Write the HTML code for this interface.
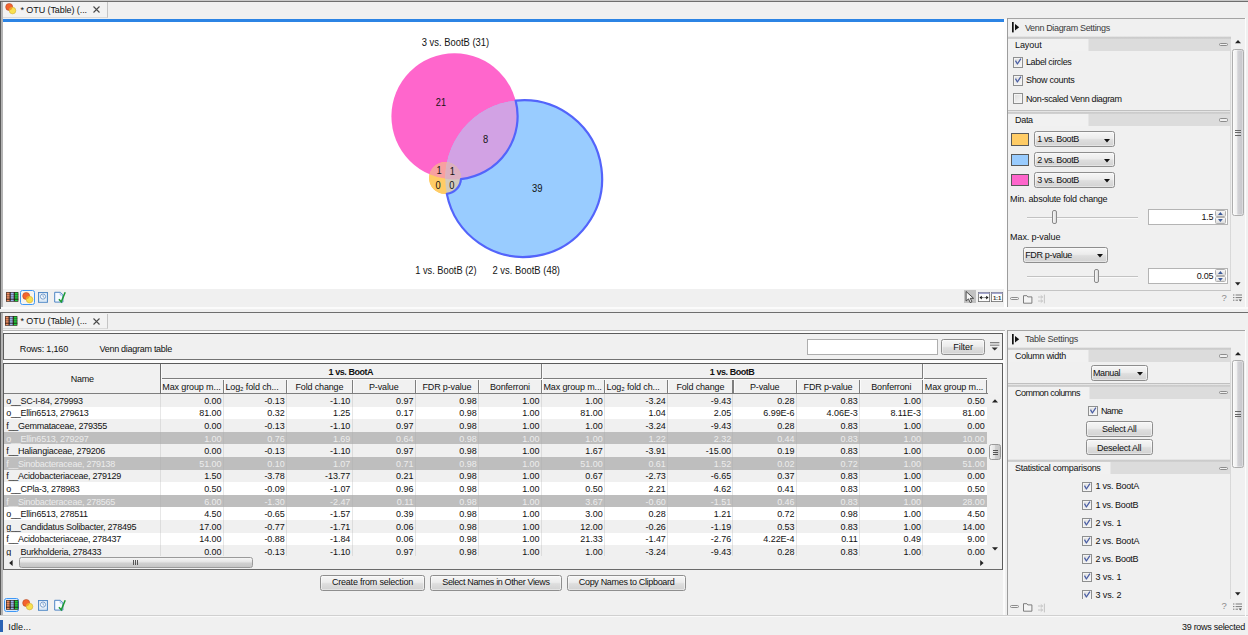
<!DOCTYPE html>
<html lang="en"><head><meta charset="utf-8"><title>OTU (Table) - Venn diagram</title>
<style>
html,body{margin:0;padding:0;background:#f0f0f0;}
body{width:1248px;height:635px;overflow:hidden;}
#app{position:relative;width:1248px;height:635px;overflow:hidden;background:#f0f0f0;
  font-family:"Liberation Sans",sans-serif;font-size:9px;color:#111;letter-spacing:-0.24px;}
#app div{position:absolute;box-sizing:border-box;}
#app svg{position:absolute;overflow:visible;}
.t{white-space:pre;line-height:12px;height:12px;}
.c{text-align:center;}
.b{font-weight:bold;}
.btn{border:1px solid #8e8e8e;border-radius:2.5px;background:linear-gradient(#f6f6f6,#ececec 45%,#dedede 55%,#d2d2d2);
  text-align:center;white-space:pre;box-shadow:inset 0 0 0 0.6px rgba(255,255,255,.8);}
.combo{border:1px solid #8e8e8e;border-radius:2.5px;background:linear-gradient(#f6f6f6,#ececec 45%,#dedede 55%,#d2d2d2);
  white-space:pre;box-shadow:inset 0 0 0 0.6px rgba(255,255,255,.8);}
.cb{border:1px solid #8e8f8f;background:linear-gradient(135deg,#dcdcdc,#f8f8f8);box-shadow:inset 0 0 0 1px #f4f4f4;}
.hdrtab{background:#f0f0f0;}
.hdrbar{background:#dcdcdc;}

</style></head>
<body>
<div id="app">
<div style="left:0px;top:0px;width:1248px;height:1px;background:#c8c8c8"></div>
<div style="left:0px;top:1px;width:1248px;height:1px;background:#6e6e6e"></div>
<div style="left:0px;top:1px;width:1.3px;height:307.5px;background:#5a5a5a"></div>
<div style="left:1.3px;top:2px;width:1.4px;height:306.5px;background:#b4b4b4"></div>
<div style="left:2.6px;top:2.2px;width:105px;height:15.6px;background:#f2f2f2;border-right:1px solid #c4c4c4;border-bottom:1px solid #dadada"></div>
<svg style="left:5.2px;top:3.4px" width="12" height="12" viewBox="0 0 12 12"><circle cx="4.2" cy="4.0" r="3.55" fill="#f4642e" stroke="#a8401c" stroke-width=".5"/><circle cx="7.55" cy="7.6" r="3.3" fill="#f8e050" stroke="#c8a428" stroke-width=".5"/><path d="M4.3 7.4A3.3 3.3 0 0 1 7.5 4.3 3.55 3.55 0 0 1 4.3 7.4Z" fill="#f4a024"/></svg>
<div class="t" style="left:20.5px;top:3.80px;letter-spacing:-0.084px;">* OTU (Table) (...</div>
<svg style="left:93.2px;top:6.2px" width="7" height="7" viewBox="0 0 7 7"><path d="M.5 .5L6.5 6.5M6.5 .5L.5 6.5" stroke="#4a4a4a" stroke-width="1.1"/></svg>
<div style="left:2.8px;top:18.6px;width:1001.6px;height:3.4px;background:#fff"></div>
<div style="left:2.8px;top:19.2px;width:1001.6px;height:2.4px;background:#2c84e4"></div>
<div style="left:2.8px;top:21.8px;width:1001.6px;height:267.4px;background:#fff"></div>
<svg style="left:0;top:0" width="1248" height="300" viewBox="0 0 1248 300" font-family="Liberation Sans, sans-serif" font-size="10.1" fill="#141414" letter-spacing="0"><defs><clipPath id="cB"><circle cx="523.7" cy="178.55" r="78.4" /></clipPath><clipPath id="cP"><circle cx="454.5" cy="116.3" r="63.1" /></clipPath><clipPath id="cO"><circle cx="445.0" cy="178.0" r="16.0" /></clipPath></defs><circle cx="445.0" cy="178.0" r="16.0" fill="#ffcc66"/><circle cx="454.5" cy="116.3" r="63.1" fill="#ff66cc"/><circle cx="523.7" cy="178.55" r="78.4" fill="#99ccff"/><circle cx="454.5" cy="116.3" r="63.1" fill="#d2a2e4" clip-path="url(#cB)"/><g clip-path="url(#cO)"><circle cx="445.0" cy="178.0" r="16.0" fill="#ffcc66"/><circle cx="454.5" cy="116.3" r="63.1" fill="#f8a0a0"/><circle cx="523.7" cy="178.55" r="78.4" fill="#d2cabc"/><g clip-path="url(#cB)"><circle cx="454.5" cy="116.3" r="63.1" fill="#dcb0c0"/></g></g><path d="M515.61 100.57A78.4 78.4 0 1 1 446.82 193.90A16.0 16.0 0 0 0 460.96 179.07A63.1 63.1 0 0 0 515.61 100.57Z" fill="none" stroke="#5364fb" stroke-width="2.2" stroke-linejoin="round"/><text x="421.8" y="45.7" textLength="67.3" lengthAdjust="spacingAndGlyphs">3 vs. BootB (31)</text><text x="415.2" y="274.1" textLength="61.3" lengthAdjust="spacingAndGlyphs">1 vs. BootB (2)</text><text x="492.5" y="274.1" textLength="67.5" lengthAdjust="spacingAndGlyphs">2 vs. BootB (48)</text><text x="435.8" y="106.4" textLength="10.2" lengthAdjust="spacingAndGlyphs">21</text><text x="483" y="143.1" textLength="5.2" lengthAdjust="spacingAndGlyphs">8</text><text x="531.9" y="191.8" textLength="10.5" lengthAdjust="spacingAndGlyphs">39</text><text x="436.6" y="174.2" textLength="5.2" lengthAdjust="spacingAndGlyphs">1</text><text x="449.8" y="175.3" textLength="5.2" lengthAdjust="spacingAndGlyphs">1</text><text x="435.4" y="189.1" textLength="5.2" lengthAdjust="spacingAndGlyphs">0</text><text x="449.2" y="189.1" textLength="5.2" lengthAdjust="spacingAndGlyphs">0</text></svg>
<svg style="left:5.6px;top:292.1px" width="12.4" height="9.8" viewBox="0 0 12.4 9.8"><rect x="0" y="0" width="12.4" height="9.8" rx=".5" fill="#2e201a"/><rect x=".6" y=".6" width="3.0" height="8.6" fill="#f09064"/><rect x="4.7" y=".6" width="3.0" height="8.6" fill="#9cb4f0"/><rect x="8.8" y=".6" width="3.0" height="8.6" fill="#1ed040"/><path d="M0 2.6H12.4M0 4.8H12.4" stroke="#2e201a" stroke-width=".7" opacity=".6"/><path d="M0 7.2H12.4" stroke="#20140e" stroke-width="1" opacity=".85"/></svg>
<div style="left:20.2px;top:290.2px;width:14.6px;height:14.6px;border:1px solid #3f98f6;border-radius:2.5px;background:#f6f4ee"></div>
<svg style="left:22px;top:291.8px" width="12" height="12" viewBox="0 0 12 12"><circle cx="4.2" cy="4.0" r="3.55" fill="#f4642e" stroke="#a8401c" stroke-width=".5"/><circle cx="7.55" cy="7.6" r="3.3" fill="#f8e050" stroke="#c8a428" stroke-width=".5"/><path d="M4.3 7.4A3.3 3.3 0 0 1 7.5 4.3 3.55 3.55 0 0 1 4.3 7.4Z" fill="#f4a024"/></svg>
<svg style="left:38.4px;top:292.1px" width="10" height="10.8" viewBox="0 0 10 10.8"><rect x=".5" y=".5" width="9" height="9.8" fill="#c4daf0" stroke="#4a84c4" stroke-width=".9"/><rect x="1.5" y="1.4" width="7" height="6.6" fill="#eef4fa"/><circle cx="5" cy="4.6" r="2.6" fill="#f8fbfe" stroke="#5a88c0" stroke-width=".8"/><path d="M5 3.1V4.7L6.3 5.3" stroke="#5a88c0" stroke-width=".7" fill="none"/><path d="M1.6 8.9H8.4" stroke="#f0f6fc" stroke-width=".9"/></svg>
<svg style="left:53.8px;top:291px" width="13" height="12" viewBox="0 0 13 12"><path d="M.7 1.3H6.4L8.9 3.8V11.1H.7Z" fill="#f6faff" stroke="#3c78c0" stroke-width=".9"/><path d="M6.2 1.5V4H8.7" fill="none" stroke="#7ca4d8" stroke-width=".7"/><path d="M4.9 8.2L7.3 10.8L11.2 1.2" fill="none" stroke="#1c9a34" stroke-width="1.5"/></svg>
<div style="left:964px;top:290.2px;width:11.8px;height:12.4px;background:#c2c2c2"></div>
<svg style="left:965px;top:290.6px" width="10" height="12" viewBox="0 0 10 12"><path d="M1.1 .5V10L3.5 7.9L5.2 11.6L6.9 10.8L5.3 7.3H8.6Z" fill="#f6f6f6" stroke="#3a3a3a" stroke-width=".9" stroke-linejoin="round"/></svg>
<svg style="left:977.8px;top:292px" width="12" height="10" viewBox="0 0 12 10"><rect x=".4" y=".4" width="11.2" height="9.2" fill="#fcfcfc" stroke="#6c6c6c" stroke-width=".8"/><rect x=".4" y=".4" width="11.2" height="1.5" fill="#9a9cc8"/><path d="M1.4 5.6L3.8 3.8V7.4ZM10.6 5.6L8.2 3.8V7.4Z" fill="#111"/><path d="M3.8 5.6H8.2" stroke="#111" stroke-width=".8" stroke-dasharray="1 .7"/></svg>
<svg style="left:991px;top:292px" width="12" height="10" viewBox="0 0 12 10"><rect x=".4" y=".4" width="11.2" height="9.2" fill="#fcfcfc" stroke="#6c6c6c" stroke-width=".8"/><rect x=".4" y=".4" width="11.2" height="1.5" fill="#9a9cc8"/><text x="6" y="8.2" font-size="6" font-family="Liberation Sans, sans-serif" text-anchor="middle" fill="#3c3c3c" font-weight="bold" letter-spacing="-.2">1:1</text></svg>
<div style="left:1.3px;top:307.4px;width:1246.7px;height:1.2px;background:#fbfbfb"></div>
<div style="left:1004.4px;top:18.6px;width:2.4px;height:289px;background:#fdfdfd"></div>
<div style="left:1006.8px;top:18.2px;width:238.4px;height:1.2px;background:#a4a4a4"></div>
<div style="left:1006.8px;top:18.2px;width:1.1px;height:288.4px;background:#9c9c9c"></div>
<div style="left:1245.2px;top:18.2px;width:1.2px;height:289px;background:#fcfcfc"></div>
<svg style="left:1012.2px;top:22.200000000000003px" width="8" height="10.4" viewBox="0 0 8 10.4"><rect x="0" y="0" width="1.7" height="10.4" fill="#111"/><path d="M3 2L7.2 5.2L3 8.4Z" fill="#111"/></svg>
<div class="t" style="left:1024.9px;top:21.50px;letter-spacing:-0.340px;color:#3c3c3c">Venn Diagram Settings</div>
<div style="left:1008px;top:35.599999999999994px;width:222.5999999999999px;height:3.2px;background:linear-gradient(#f0f0f0,#c8c8c8 55%,#d4d4d4)"></div>
<div style="left:1008px;top:38.8px;width:222.5999999999999px;height:12px;background:#dcdcdc"></div>
<div style="left:1008px;top:38.8px;width:80.8px;height:12px;background:#f1f1f1;border-right:1px solid #e6e6e6"></div>
<div class="t" style="left:1015.0px;top:38.70px;letter-spacing:-0.070px;">Layout</div>
<div style="left:1218.6px;top:43.0px;width:9.4px;height:3.4px;border:.9px solid #8c8c8c;border-radius:1.6px;background:#f0f0f0"></div>
<div class="cb" style="left:1013.1px;top:57.2px;width:10.4px;height:10.4px;"></div>
<svg style="left:1013.1px;top:57.2px" width="10.4" height="10.4" viewBox="0 0 10.4 10.4"><path d="M2.5 3.6L4.4 7L7.9 1.6" fill="none" stroke="#4a5ea4" stroke-width="1.25" stroke-linejoin="round"/></svg>
<div class="t" style="left:1025.9px;top:56.40px;letter-spacing:-0.340px;">Label circles</div>
<div class="cb" style="left:1013.1px;top:75.26px;width:10.4px;height:10.4px;"></div>
<svg style="left:1013.1px;top:75.26px" width="10.4" height="10.4" viewBox="0 0 10.4 10.4"><path d="M2.5 3.6L4.4 7L7.9 1.6" fill="none" stroke="#4a5ea4" stroke-width="1.25" stroke-linejoin="round"/></svg>
<div class="t" style="left:1025.9px;top:74.46px;letter-spacing:-0.266px;">Show counts</div>
<div class="cb" style="left:1013.1px;top:93.32px;width:10.4px;height:10.4px;"></div>
<div class="t" style="left:1025.9px;top:92.52px;letter-spacing:-0.341px;">Non-scaled Venn diagram</div>
<div style="left:1008px;top:110.2px;width:222.6px;height:1px;background:#c0c0c0"></div>
<div style="left:1008px;top:110.8px;width:222.5999999999999px;height:3.2px;background:linear-gradient(#f0f0f0,#c8c8c8 55%,#d4d4d4)"></div>
<div style="left:1008px;top:114.0px;width:222.5999999999999px;height:12px;background:#dcdcdc"></div>
<div style="left:1008px;top:114.0px;width:80.8px;height:12px;background:#f1f1f1;border-right:1px solid #e6e6e6"></div>
<div class="t" style="left:1015.0px;top:113.90px;letter-spacing:-0.302px;">Data</div>
<div style="left:1218.6px;top:118.2px;width:9.4px;height:3.4px;border:.9px solid #8c8c8c;border-radius:1.6px;background:#f0f0f0"></div>
<div style="left:1010.9px;top:133.29999999999998px;width:18.1px;height:12.3px;background:#ffcc66;border:1px solid #5a5a5a"></div>
<div class="combo" style="left:1033.7px;top:131.2px;width:81.3px;height:15.8px;"></div>
<div class="t" style="left:1037.2px;top:133.20px;letter-spacing:-0.393px;">1 vs. BootB</div>
<svg style="left:1103.8px;top:138.5px" width="6" height="4" viewBox="0 0 6 4"><path d="M0 0H6L3 3.4Z" fill="#111"/></svg>
<div style="left:1010.9px;top:153.7px;width:18.1px;height:12.3px;background:#99ccff;border:1px solid #5a5a5a"></div>
<div class="combo" style="left:1033.7px;top:151.6px;width:81.3px;height:15.8px;"></div>
<div class="t" style="left:1037.2px;top:153.60px;letter-spacing:-0.393px;">2 vs. BootB</div>
<svg style="left:1103.8px;top:158.9px" width="6" height="4" viewBox="0 0 6 4"><path d="M0 0H6L3 3.4Z" fill="#111"/></svg>
<div style="left:1010.9px;top:174.1px;width:18.1px;height:12.3px;background:#ff66cc;border:1px solid #5a5a5a"></div>
<div class="combo" style="left:1033.7px;top:172.0px;width:81.3px;height:15.8px;"></div>
<div class="t" style="left:1037.2px;top:174.00px;letter-spacing:-0.393px;">3 vs. BootB</div>
<svg style="left:1103.8px;top:179.3px" width="6" height="4" viewBox="0 0 6 4"><path d="M0 0H6L3 3.4Z" fill="#111"/></svg>
<div class="t" style="left:1010.1px;top:192.60px;letter-spacing:-0.210px;">Min. absolute fold change</div>
<div style="left:1026.6px;top:216.7px;width:111.80000000000018px;height:1.1px;background:#c2c2c2"></div>
<div style="left:1026.6px;top:217.79999999999998px;width:111.80000000000018px;height:0.8px;background:#fafafa"></div>
<div style="left:1052.3px;top:210.0px;width:5.0px;height:14.3px;border:1px solid #8a8a8a;border-radius:2px;background:linear-gradient(90deg,#f8f8f8,#dcdcdc)"></div>
<div style="left:1148.1px;top:209.2px;width:79.5px;height:15.6px;background:#fff;border:1px solid #b4b4b4"></div>
<div class="t" style="right:34.80000000000018px;top:211.30px;">1.5</div>
<div style="left:1215.1999999999998px;top:210.39999999999998px;width:11.2px;height:6.6px;border:1px solid #b0b0b0;border-radius:1.5px;background:linear-gradient(#f8f8f8,#dddddd)"></div>
<div style="left:1215.1999999999998px;top:217.0px;width:11.2px;height:6.6px;border:1px solid #b0b0b0;border-radius:1.5px;background:linear-gradient(#f8f8f8,#dddddd)"></div>
<svg style="left:1218.3999999999999px;top:212.39999999999998px" width="4.8" height="3" viewBox="0 0 4.8 3"><path d="M0 3H4.8L2.4 0Z" fill="#3a5a9a"/></svg>
<svg style="left:1218.3999999999999px;top:218.6px" width="4.8" height="3" viewBox="0 0 4.8 3"><path d="M0 0H4.8L2.4 3Z" fill="#3a5a9a"/></svg>
<div class="t" style="left:1010.1px;top:231.00px;letter-spacing:-0.110px;">Max. p-value</div>
<div class="combo" style="left:1022.9px;top:247.1px;width:84.8px;height:15.6px;"></div>
<div class="t" style="left:1025.2px;top:249.00px;letter-spacing:-0.338px;">FDR p-value</div>
<svg style="left:1096.5px;top:254.3px" width="6" height="4" viewBox="0 0 6 4"><path d="M0 0H6L3 3.4Z" fill="#111"/></svg>
<div style="left:1026.6px;top:275.5px;width:111.80000000000018px;height:1.1px;background:#c2c2c2"></div>
<div style="left:1026.6px;top:276.59999999999997px;width:111.80000000000018px;height:0.8px;background:#fafafa"></div>
<div style="left:1094px;top:268.79999999999995px;width:5.0px;height:14.3px;border:1px solid #8a8a8a;border-radius:2px;background:linear-gradient(90deg,#f8f8f8,#dcdcdc)"></div>
<div style="left:1148.1px;top:268.1px;width:79.5px;height:15.6px;background:#fff;border:1px solid #b4b4b4"></div>
<div class="t" style="right:34.80000000000018px;top:270.20px;">0.05</div>
<div style="left:1215.1999999999998px;top:269.3px;width:11.2px;height:6.6px;border:1px solid #b0b0b0;border-radius:1.5px;background:linear-gradient(#f8f8f8,#dddddd)"></div>
<div style="left:1215.1999999999998px;top:275.90000000000003px;width:11.2px;height:6.6px;border:1px solid #b0b0b0;border-radius:1.5px;background:linear-gradient(#f8f8f8,#dddddd)"></div>
<svg style="left:1218.3999999999999px;top:271.3px" width="4.8" height="3" viewBox="0 0 4.8 3"><path d="M0 3H4.8L2.4 0Z" fill="#3a5a9a"/></svg>
<svg style="left:1218.3999999999999px;top:277.50000000000006px" width="4.8" height="3" viewBox="0 0 4.8 3"><path d="M0 0H4.8L2.4 3Z" fill="#3a5a9a"/></svg>
<div style="left:1229.8000000000002px;top:49.4px;width:1.2px;height:240.20000000000002px;background:linear-gradient(90deg,#cfcfcf,#e2e2e2)"></div>
<svg style="left:1235.0px;top:40.4px" width="6" height="3.4" viewBox="0 0 6 3.4"><path d="M0 3.2H6L3 0Z" fill="#222"/></svg>
<svg style="left:1235.2px;top:282.0px" width="5.6" height="3.4" viewBox="0 0 5.6 3.4"><path d="M0 .2H5.6L2.8 3.4Z" fill="#222"/></svg>
<div style="left:1231.8000000000002px;top:49.3px;width:11.8px;height:166.7px;border:1.1px solid #adadad;border-radius:2.5px;background:linear-gradient(90deg,#fbfbfb,#f0f0f0 38%,#d2d2d6 48%,#c6c6ca);box-shadow:inset 0 0 0 .6px rgba(255,255,255,.6)"></div>
<div style="left:1235.4px;top:129.85px;width:5.2px;height:0.9px;background:#666"></div>
<div style="left:1235.4px;top:132.25px;width:5.2px;height:0.9px;background:#666"></div>
<div style="left:1235.4px;top:134.65px;width:5.2px;height:0.9px;background:#666"></div>
<div style="left:1008px;top:290px;width:1223px;height:1px;background:#c4c4c4;width:222.6px"></div>
<div style="left:1010.1px;top:296.8px;width:8.8px;height:3.3px;border:.9px solid #8c8c8c;border-radius:1.6px;background:#f2f2f2"></div>
<svg style="left:1022.6px;top:294.6px" width="10" height="9" viewBox="0 0 10 9"><path d="M.5 8.2V.7H3.9L4.8 1.9H8.9V8.2Z" fill="#f4f4f4" stroke="#707070" stroke-width=".9" stroke-linejoin="round"/></svg>
<svg style="left:1036.6px;top:294.2px" width="9" height="10" viewBox="0 0 9 10"><path d="M1 3H5.6M1 7H5.6M7.4 .6V9.4M3.8 1.4L5.6 3L3.8 4.6M3.8 5.4L5.6 7L3.8 8.6" fill="none" stroke="#c0c0c0" stroke-width=".9"/></svg>
<div class="t" style="left:1221.4px;top:291.80px;color:#8a8a8a;font-size:9.5px">?</div>
<svg style="left:1233.4px;top:294.4px" width="9" height="8" viewBox="0 0 9 8"><path d="M0 1H1.4M2.6 1H9M0 3.6H1.4M2.6 3.6H9M0 6.2H1.4M2.6 6.2H5" stroke="#7a7a7a" stroke-width="1"/><path d="M5.6 5.4H9L7.3 7.6Z" fill="#555"/></svg>
<div style="left:0px;top:311.8px;width:1248px;height:1.2px;background:#6e6e6e"></div>
<div style="left:0px;top:313px;width:1.3px;height:303px;background:#5a5a5a"></div>
<div style="left:1.3px;top:313px;width:1.4px;height:303px;background:#b4b4b4"></div>
<div style="left:2.6px;top:313.6px;width:105px;height:15.8px;background:#f2f2f2;border-right:1px solid #c4c4c4;border-bottom:1px solid #dadada"></div>
<svg style="left:5.2px;top:315.8px" width="12.4" height="9.8" viewBox="0 0 12.4 9.8"><rect x="0" y="0" width="12.4" height="9.8" rx=".5" fill="#2e201a"/><rect x=".6" y=".6" width="3.0" height="8.6" fill="#f09064"/><rect x="4.7" y=".6" width="3.0" height="8.6" fill="#9cb4f0"/><rect x="8.8" y=".6" width="3.0" height="8.6" fill="#1ed040"/><path d="M0 2.6H12.4M0 4.8H12.4" stroke="#2e201a" stroke-width=".7" opacity=".6"/><path d="M0 7.2H12.4" stroke="#20140e" stroke-width="1" opacity=".85"/></svg>
<div class="t" style="left:20.5px;top:315.30px;letter-spacing:-0.084px;">* OTU (Table) (...</div>
<svg style="left:93.2px;top:317.6px" width="7" height="7" viewBox="0 0 7 7"><path d="M.5 .5L6.5 6.5M6.5 .5L.5 6.5" stroke="#4a4a4a" stroke-width="1.1"/></svg>
<div style="left:2.6px;top:329.6px;width:1002px;height:1px;background:#b4b4b4"></div>
<div style="left:2.6px;top:330.6px;width:1002px;height:2.2px;background:#fcfcfc"></div>
<div style="left:1003px;top:330.6px;width:1.6px;height:286px;background:#fbfbfb"></div>
<div style="left:1004.6px;top:330.6px;width:1.8px;height:286px;background:#f0f0f0"></div>
<div style="left:2.8px;top:332.6px;width:1000.2px;height:27.4px;border:1.5px solid #5c5c5c;border-bottom:1.1px solid #727272;border-right-width:1.2px;background:#f0f0f0"></div>
<div style="left:2.8px;top:360px;width:1000.2px;height:2.6px;background:#fdfdfd"></div>
<div style="left:2.8px;top:362.6px;width:1000.2px;height:207.2px;border:1.5px solid #5c5c5c;border-right-width:1.2px;border-bottom:1.2px solid #6a6a6a;background:#f0f0f0"></div>
<div class="t" style="left:19.8px;top:343.10px;letter-spacing:-0.166px;">Rows: 1,160</div>
<div class="t" style="left:99.5px;top:343.10px;letter-spacing:-0.280px;">Venn diagram table</div>
<div style="left:807.2px;top:339.4px;width:131.2px;height:16px;background:#fff;border:1px solid #aeaeae"></div>
<div class="btn" style="left:941.4px;top:339.3px;width:43.4px;height:16.2px;line-height:14.0px;padding-top:0px;letter-spacing:-0.083px;">Filter</div>
<svg style="left:989.8px;top:341.8px" width="9.4" height="9" viewBox="0 0 9.4 9"><path d="M0 .7H9.4" stroke="#555" stroke-width=".9"/><path d="M0 3.2H9.4" stroke="#8a8a8a" stroke-width="1.2"/><path d="M1.6 5.4H7.8L4.7 8.6Z" fill="#333"/></svg>
<div style="left:4.3px;top:364.0px;width:997.5px;height:30.0px;background:#f1f1f1"></div>
<div style="left:4.3px;top:394.0px;width:982.7px;height:161.70000000000005px;overflow:hidden;background:#fff">
<div style="left:0;top:0.00px;width:982.7px;height:12.70px;overflow:hidden;background:#f0f0f0;">
<div class="t" style="left:2.0px;top:0.9px;letter-spacing:-0.252px;">o__SC-I-84, 279993</div>
<div class="t" style="right:765.5px;top:0.9px;letter-spacing:-0.05px">0.00</div>
<div class="t" style="right:702.3px;top:0.9px;letter-spacing:-0.05px">-0.13</div>
<div class="t" style="right:636.7px;top:0.9px;letter-spacing:-0.05px">-1.10</div>
<div class="t" style="right:573.6px;top:0.9px;letter-spacing:-0.05px">0.97</div>
<div class="t" style="right:510.4px;top:0.9px;letter-spacing:-0.05px">0.98</div>
<div class="t" style="right:447.5px;top:0.9px;letter-spacing:-0.05px">1.00</div>
<div class="t" style="right:384.4px;top:0.9px;letter-spacing:-0.05px">1.00</div>
<div class="t" style="right:321.2px;top:0.9px;letter-spacing:-0.05px">-3.24</div>
<div class="t" style="right:255.9px;top:0.9px;letter-spacing:-0.05px">-9.43</div>
<div class="t" style="right:192.5px;top:0.9px;letter-spacing:-0.05px">0.28</div>
<div class="t" style="right:129.2px;top:0.9px;letter-spacing:-0.05px">0.83</div>
<div class="t" style="right:66.1px;top:0.9px;letter-spacing:-0.05px">1.00</div>
<div class="t" style="right:2.3px;top:0.9px;letter-spacing:-0.05px">0.50</div>
</div>
<div style="left:0;top:12.60px;width:982.7px;height:12.70px;overflow:hidden;background:#ffffff;">
<div class="t" style="left:2.0px;top:0.9px;letter-spacing:-0.244px;">o__Ellin6513, 279613</div>
<div class="t" style="right:765.5px;top:0.9px;letter-spacing:-0.05px">81.00</div>
<div class="t" style="right:702.3px;top:0.9px;letter-spacing:-0.05px">0.32</div>
<div class="t" style="right:636.7px;top:0.9px;letter-spacing:-0.05px">1.25</div>
<div class="t" style="right:573.6px;top:0.9px;letter-spacing:-0.05px">0.17</div>
<div class="t" style="right:510.4px;top:0.9px;letter-spacing:-0.05px">0.98</div>
<div class="t" style="right:447.5px;top:0.9px;letter-spacing:-0.05px">1.00</div>
<div class="t" style="right:384.4px;top:0.9px;letter-spacing:-0.05px">81.00</div>
<div class="t" style="right:321.2px;top:0.9px;letter-spacing:-0.05px">1.04</div>
<div class="t" style="right:255.9px;top:0.9px;letter-spacing:-0.05px">2.05</div>
<div class="t" style="right:192.5px;top:0.9px;letter-spacing:-0.05px">6.99E-6</div>
<div class="t" style="right:129.2px;top:0.9px;letter-spacing:-0.05px">4.06E-3</div>
<div class="t" style="right:66.1px;top:0.9px;letter-spacing:-0.05px">8.11E-3</div>
<div class="t" style="right:2.3px;top:0.9px;letter-spacing:-0.05px">81.00</div>
</div>
<div style="left:0;top:25.20px;width:982.7px;height:12.70px;overflow:hidden;background:#f0f0f0;">
<div class="t" style="left:2.0px;top:0.9px;letter-spacing:-0.271px;">f__Gemmataceae, 279355</div>
<div class="t" style="right:765.5px;top:0.9px;letter-spacing:-0.05px">0.00</div>
<div class="t" style="right:702.3px;top:0.9px;letter-spacing:-0.05px">-0.13</div>
<div class="t" style="right:636.7px;top:0.9px;letter-spacing:-0.05px">-1.10</div>
<div class="t" style="right:573.6px;top:0.9px;letter-spacing:-0.05px">0.97</div>
<div class="t" style="right:510.4px;top:0.9px;letter-spacing:-0.05px">0.98</div>
<div class="t" style="right:447.5px;top:0.9px;letter-spacing:-0.05px">1.00</div>
<div class="t" style="right:384.4px;top:0.9px;letter-spacing:-0.05px">1.00</div>
<div class="t" style="right:321.2px;top:0.9px;letter-spacing:-0.05px">-3.24</div>
<div class="t" style="right:255.9px;top:0.9px;letter-spacing:-0.05px">-9.43</div>
<div class="t" style="right:192.5px;top:0.9px;letter-spacing:-0.05px">0.28</div>
<div class="t" style="right:129.2px;top:0.9px;letter-spacing:-0.05px">0.83</div>
<div class="t" style="right:66.1px;top:0.9px;letter-spacing:-0.05px">1.00</div>
<div class="t" style="right:2.3px;top:0.9px;letter-spacing:-0.05px">0.00</div>
</div>
<div style="left:0;top:37.80px;width:982.7px;height:12.70px;overflow:hidden;background:#bebebe;color:#ececec;">
<div class="t" style="left:2.0px;top:0.9px;letter-spacing:-0.244px;">o__Ellin6513, 279297</div>
<div class="t" style="right:765.5px;top:0.9px;letter-spacing:-0.05px">1.00</div>
<div class="t" style="right:702.3px;top:0.9px;letter-spacing:-0.05px">0.76</div>
<div class="t" style="right:636.7px;top:0.9px;letter-spacing:-0.05px">1.69</div>
<div class="t" style="right:573.6px;top:0.9px;letter-spacing:-0.05px">0.64</div>
<div class="t" style="right:510.4px;top:0.9px;letter-spacing:-0.05px">0.98</div>
<div class="t" style="right:447.5px;top:0.9px;letter-spacing:-0.05px">1.00</div>
<div class="t" style="right:384.4px;top:0.9px;letter-spacing:-0.05px">1.00</div>
<div class="t" style="right:321.2px;top:0.9px;letter-spacing:-0.05px">1.22</div>
<div class="t" style="right:255.9px;top:0.9px;letter-spacing:-0.05px">2.32</div>
<div class="t" style="right:192.5px;top:0.9px;letter-spacing:-0.05px">0.44</div>
<div class="t" style="right:129.2px;top:0.9px;letter-spacing:-0.05px">0.83</div>
<div class="t" style="right:66.1px;top:0.9px;letter-spacing:-0.05px">1.00</div>
<div class="t" style="right:2.3px;top:0.9px;letter-spacing:-0.05px">10.00</div>
</div>
<div style="left:0;top:50.40px;width:982.7px;height:12.70px;overflow:hidden;background:#f0f0f0;">
<div class="t" style="left:2.0px;top:0.9px;letter-spacing:-0.244px;">f__Haliangiaceae, 279206</div>
<div class="t" style="right:765.5px;top:0.9px;letter-spacing:-0.05px">0.00</div>
<div class="t" style="right:702.3px;top:0.9px;letter-spacing:-0.05px">-0.13</div>
<div class="t" style="right:636.7px;top:0.9px;letter-spacing:-0.05px">-1.10</div>
<div class="t" style="right:573.6px;top:0.9px;letter-spacing:-0.05px">0.97</div>
<div class="t" style="right:510.4px;top:0.9px;letter-spacing:-0.05px">0.98</div>
<div class="t" style="right:447.5px;top:0.9px;letter-spacing:-0.05px">1.00</div>
<div class="t" style="right:384.4px;top:0.9px;letter-spacing:-0.05px">1.67</div>
<div class="t" style="right:321.2px;top:0.9px;letter-spacing:-0.05px">-3.91</div>
<div class="t" style="right:255.9px;top:0.9px;letter-spacing:-0.05px">-15.00</div>
<div class="t" style="right:192.5px;top:0.9px;letter-spacing:-0.05px">0.19</div>
<div class="t" style="right:129.2px;top:0.9px;letter-spacing:-0.05px">0.83</div>
<div class="t" style="right:66.1px;top:0.9px;letter-spacing:-0.05px">1.00</div>
<div class="t" style="right:2.3px;top:0.9px;letter-spacing:-0.05px">0.00</div>
</div>
<div style="left:0;top:63.00px;width:982.7px;height:12.70px;overflow:hidden;background:#bebebe;color:#ececec;">
<div class="t" style="left:2.0px;top:0.9px;letter-spacing:-0.248px;">f__Sinobacteraceae, 279138</div>
<div class="t" style="right:765.5px;top:0.9px;letter-spacing:-0.05px">51.00</div>
<div class="t" style="right:702.3px;top:0.9px;letter-spacing:-0.05px">0.10</div>
<div class="t" style="right:636.7px;top:0.9px;letter-spacing:-0.05px">1.07</div>
<div class="t" style="right:573.6px;top:0.9px;letter-spacing:-0.05px">0.71</div>
<div class="t" style="right:510.4px;top:0.9px;letter-spacing:-0.05px">0.98</div>
<div class="t" style="right:447.5px;top:0.9px;letter-spacing:-0.05px">1.00</div>
<div class="t" style="right:384.4px;top:0.9px;letter-spacing:-0.05px">51.00</div>
<div class="t" style="right:321.2px;top:0.9px;letter-spacing:-0.05px">0.61</div>
<div class="t" style="right:255.9px;top:0.9px;letter-spacing:-0.05px">1.52</div>
<div class="t" style="right:192.5px;top:0.9px;letter-spacing:-0.05px">0.02</div>
<div class="t" style="right:129.2px;top:0.9px;letter-spacing:-0.05px">0.72</div>
<div class="t" style="right:66.1px;top:0.9px;letter-spacing:-0.05px">1.00</div>
<div class="t" style="right:2.3px;top:0.9px;letter-spacing:-0.05px">51.00</div>
</div>
<div style="left:0;top:75.60px;width:982.7px;height:12.70px;overflow:hidden;background:#f0f0f0;">
<div class="t" style="left:2.0px;top:0.9px;letter-spacing:-0.243px;">f__Acidobacteriaceae, 279129</div>
<div class="t" style="right:765.5px;top:0.9px;letter-spacing:-0.05px">1.50</div>
<div class="t" style="right:702.3px;top:0.9px;letter-spacing:-0.05px">-3.78</div>
<div class="t" style="right:636.7px;top:0.9px;letter-spacing:-0.05px">-13.77</div>
<div class="t" style="right:573.6px;top:0.9px;letter-spacing:-0.05px">0.21</div>
<div class="t" style="right:510.4px;top:0.9px;letter-spacing:-0.05px">0.98</div>
<div class="t" style="right:447.5px;top:0.9px;letter-spacing:-0.05px">1.00</div>
<div class="t" style="right:384.4px;top:0.9px;letter-spacing:-0.05px">0.67</div>
<div class="t" style="right:321.2px;top:0.9px;letter-spacing:-0.05px">-2.73</div>
<div class="t" style="right:255.9px;top:0.9px;letter-spacing:-0.05px">-6.65</div>
<div class="t" style="right:192.5px;top:0.9px;letter-spacing:-0.05px">0.37</div>
<div class="t" style="right:129.2px;top:0.9px;letter-spacing:-0.05px">0.83</div>
<div class="t" style="right:66.1px;top:0.9px;letter-spacing:-0.05px">1.00</div>
<div class="t" style="right:2.3px;top:0.9px;letter-spacing:-0.05px">0.00</div>
</div>
<div style="left:0;top:88.20px;width:982.7px;height:12.70px;overflow:hidden;background:#ffffff;">
<div class="t" style="left:2.0px;top:0.9px;letter-spacing:-0.255px;">o__CPla-3, 278983</div>
<div class="t" style="right:765.5px;top:0.9px;letter-spacing:-0.05px">0.50</div>
<div class="t" style="right:702.3px;top:0.9px;letter-spacing:-0.05px">-0.09</div>
<div class="t" style="right:636.7px;top:0.9px;letter-spacing:-0.05px">-1.07</div>
<div class="t" style="right:573.6px;top:0.9px;letter-spacing:-0.05px">0.96</div>
<div class="t" style="right:510.4px;top:0.9px;letter-spacing:-0.05px">0.98</div>
<div class="t" style="right:447.5px;top:0.9px;letter-spacing:-0.05px">1.00</div>
<div class="t" style="right:384.4px;top:0.9px;letter-spacing:-0.05px">0.50</div>
<div class="t" style="right:321.2px;top:0.9px;letter-spacing:-0.05px">2.21</div>
<div class="t" style="right:255.9px;top:0.9px;letter-spacing:-0.05px">4.62</div>
<div class="t" style="right:192.5px;top:0.9px;letter-spacing:-0.05px">0.41</div>
<div class="t" style="right:129.2px;top:0.9px;letter-spacing:-0.05px">0.83</div>
<div class="t" style="right:66.1px;top:0.9px;letter-spacing:-0.05px">1.00</div>
<div class="t" style="right:2.3px;top:0.9px;letter-spacing:-0.05px">0.50</div>
</div>
<div style="left:0;top:100.80px;width:982.7px;height:12.70px;overflow:hidden;background:#bebebe;color:#ececec;">
<div class="t" style="left:2.0px;top:0.9px;letter-spacing:-0.248px;">f__Sinobacteraceae, 278565</div>
<div class="t" style="right:765.5px;top:0.9px;letter-spacing:-0.05px">6.00</div>
<div class="t" style="right:702.3px;top:0.9px;letter-spacing:-0.05px">-1.30</div>
<div class="t" style="right:636.7px;top:0.9px;letter-spacing:-0.05px">-2.47</div>
<div class="t" style="right:573.6px;top:0.9px;letter-spacing:-0.05px">0.11</div>
<div class="t" style="right:510.4px;top:0.9px;letter-spacing:-0.05px">0.98</div>
<div class="t" style="right:447.5px;top:0.9px;letter-spacing:-0.05px">1.00</div>
<div class="t" style="right:384.4px;top:0.9px;letter-spacing:-0.05px">3.67</div>
<div class="t" style="right:321.2px;top:0.9px;letter-spacing:-0.05px">-0.60</div>
<div class="t" style="right:255.9px;top:0.9px;letter-spacing:-0.05px">-1.51</div>
<div class="t" style="right:192.5px;top:0.9px;letter-spacing:-0.05px">0.46</div>
<div class="t" style="right:129.2px;top:0.9px;letter-spacing:-0.05px">0.83</div>
<div class="t" style="right:66.1px;top:0.9px;letter-spacing:-0.05px">1.00</div>
<div class="t" style="right:2.3px;top:0.9px;letter-spacing:-0.05px">28.00</div>
</div>
<div style="left:0;top:113.40px;width:982.7px;height:12.70px;overflow:hidden;background:#ffffff;">
<div class="t" style="left:2.0px;top:0.9px;letter-spacing:-0.242px;">o__Ellin6513, 278511</div>
<div class="t" style="right:765.5px;top:0.9px;letter-spacing:-0.05px">4.50</div>
<div class="t" style="right:702.3px;top:0.9px;letter-spacing:-0.05px">-0.65</div>
<div class="t" style="right:636.7px;top:0.9px;letter-spacing:-0.05px">-1.57</div>
<div class="t" style="right:573.6px;top:0.9px;letter-spacing:-0.05px">0.39</div>
<div class="t" style="right:510.4px;top:0.9px;letter-spacing:-0.05px">0.98</div>
<div class="t" style="right:447.5px;top:0.9px;letter-spacing:-0.05px">1.00</div>
<div class="t" style="right:384.4px;top:0.9px;letter-spacing:-0.05px">3.00</div>
<div class="t" style="right:321.2px;top:0.9px;letter-spacing:-0.05px">0.28</div>
<div class="t" style="right:255.9px;top:0.9px;letter-spacing:-0.05px">1.21</div>
<div class="t" style="right:192.5px;top:0.9px;letter-spacing:-0.05px">0.72</div>
<div class="t" style="right:129.2px;top:0.9px;letter-spacing:-0.05px">0.98</div>
<div class="t" style="right:66.1px;top:0.9px;letter-spacing:-0.05px">1.00</div>
<div class="t" style="right:2.3px;top:0.9px;letter-spacing:-0.05px">4.50</div>
</div>
<div style="left:0;top:126.00px;width:982.7px;height:12.70px;overflow:hidden;background:#f0f0f0;">
<div class="t" style="left:2.0px;top:0.9px;letter-spacing:-0.241px;">g__Candidatus Solibacter, 278495</div>
<div class="t" style="right:765.5px;top:0.9px;letter-spacing:-0.05px">17.00</div>
<div class="t" style="right:702.3px;top:0.9px;letter-spacing:-0.05px">-0.77</div>
<div class="t" style="right:636.7px;top:0.9px;letter-spacing:-0.05px">-1.71</div>
<div class="t" style="right:573.6px;top:0.9px;letter-spacing:-0.05px">0.06</div>
<div class="t" style="right:510.4px;top:0.9px;letter-spacing:-0.05px">0.98</div>
<div class="t" style="right:447.5px;top:0.9px;letter-spacing:-0.05px">1.00</div>
<div class="t" style="right:384.4px;top:0.9px;letter-spacing:-0.05px">12.00</div>
<div class="t" style="right:321.2px;top:0.9px;letter-spacing:-0.05px">-0.26</div>
<div class="t" style="right:255.9px;top:0.9px;letter-spacing:-0.05px">-1.19</div>
<div class="t" style="right:192.5px;top:0.9px;letter-spacing:-0.05px">0.53</div>
<div class="t" style="right:129.2px;top:0.9px;letter-spacing:-0.05px">0.83</div>
<div class="t" style="right:66.1px;top:0.9px;letter-spacing:-0.05px">1.00</div>
<div class="t" style="right:2.3px;top:0.9px;letter-spacing:-0.05px">14.00</div>
</div>
<div style="left:0;top:138.60px;width:982.7px;height:12.70px;overflow:hidden;background:#ffffff;">
<div class="t" style="left:2.0px;top:0.9px;letter-spacing:-0.243px;">f__Acidobacteriaceae, 278437</div>
<div class="t" style="right:765.5px;top:0.9px;letter-spacing:-0.05px">14.00</div>
<div class="t" style="right:702.3px;top:0.9px;letter-spacing:-0.05px">-0.88</div>
<div class="t" style="right:636.7px;top:0.9px;letter-spacing:-0.05px">-1.84</div>
<div class="t" style="right:573.6px;top:0.9px;letter-spacing:-0.05px">0.06</div>
<div class="t" style="right:510.4px;top:0.9px;letter-spacing:-0.05px">0.98</div>
<div class="t" style="right:447.5px;top:0.9px;letter-spacing:-0.05px">1.00</div>
<div class="t" style="right:384.4px;top:0.9px;letter-spacing:-0.05px">21.33</div>
<div class="t" style="right:321.2px;top:0.9px;letter-spacing:-0.05px">-1.47</div>
<div class="t" style="right:255.9px;top:0.9px;letter-spacing:-0.05px">-2.76</div>
<div class="t" style="right:192.5px;top:0.9px;letter-spacing:-0.05px">4.22E-4</div>
<div class="t" style="right:129.2px;top:0.9px;letter-spacing:-0.05px">0.11</div>
<div class="t" style="right:66.1px;top:0.9px;letter-spacing:-0.05px">0.49</div>
<div class="t" style="right:2.3px;top:0.9px;letter-spacing:-0.05px">9.00</div>
</div>
<div style="left:0;top:151.20px;width:982.7px;height:12.70px;overflow:hidden;background:#f0f0f0;">
<div class="t" style="left:2.0px;top:0.9px;letter-spacing:-0.245px;">g__Burkholderia, 278433</div>
<div class="t" style="right:765.5px;top:0.9px;letter-spacing:-0.05px">0.00</div>
<div class="t" style="right:702.3px;top:0.9px;letter-spacing:-0.05px">-0.13</div>
<div class="t" style="right:636.7px;top:0.9px;letter-spacing:-0.05px">-1.10</div>
<div class="t" style="right:573.6px;top:0.9px;letter-spacing:-0.05px">0.97</div>
<div class="t" style="right:510.4px;top:0.9px;letter-spacing:-0.05px">0.98</div>
<div class="t" style="right:447.5px;top:0.9px;letter-spacing:-0.05px">1.00</div>
<div class="t" style="right:384.4px;top:0.9px;letter-spacing:-0.05px">1.00</div>
<div class="t" style="right:321.2px;top:0.9px;letter-spacing:-0.05px">-3.24</div>
<div class="t" style="right:255.9px;top:0.9px;letter-spacing:-0.05px">-9.43</div>
<div class="t" style="right:192.5px;top:0.9px;letter-spacing:-0.05px">0.28</div>
<div class="t" style="right:129.2px;top:0.9px;letter-spacing:-0.05px">0.83</div>
<div class="t" style="right:66.1px;top:0.9px;letter-spacing:-0.05px">1.00</div>
<div class="t" style="right:2.3px;top:0.9px;letter-spacing:-0.05px">0.00</div>
</div>
<div style="left:155.5px;top:0;width:1px;height:200px;background:rgba(170,170,170,.28)"></div>
<div style="left:218.6px;top:0;width:1px;height:200px;background:rgba(170,170,170,.28)"></div>
<div style="left:281.8px;top:0;width:1px;height:200px;background:rgba(170,170,170,.28)"></div>
<div style="left:347.4px;top:0;width:1px;height:200px;background:rgba(170,170,170,.28)"></div>
<div style="left:410.5px;top:0;width:1px;height:200px;background:rgba(170,170,170,.28)"></div>
<div style="left:473.7px;top:0;width:1px;height:200px;background:rgba(170,170,170,.28)"></div>
<div style="left:536.6px;top:0;width:1px;height:200px;background:rgba(170,170,170,.28)"></div>
<div style="left:599.7px;top:0;width:1px;height:200px;background:rgba(170,170,170,.28)"></div>
<div style="left:662.9px;top:0;width:1px;height:200px;background:rgba(170,170,170,.28)"></div>
<div style="left:728.2px;top:0;width:1px;height:200px;background:rgba(170,170,170,.28)"></div>
<div style="left:791.6px;top:0;width:1px;height:200px;background:rgba(170,170,170,.28)"></div>
<div style="left:854.9px;top:0;width:1px;height:200px;background:rgba(170,170,170,.28)"></div>
<div style="left:918.0px;top:0;width:1px;height:200px;background:rgba(170,170,170,.28)"></div>
</div>
<div style="left:4.3px;top:392.9px;width:983.7px;height:1.3px;background:#7e7e7e"></div>
<div style="left:160.3px;top:377.79999999999995px;width:826.7px;height:1.3px;background:#7e7e7e"></div>
<div style="left:159.60000000000002px;top:364.0px;width:1.6px;height:30.0px;background:#6c6c6c"></div>
<div style="left:160.9px;top:364.4px;width:1px;height:29.0px;background:#fbfbfb"></div>
<div style="left:222.70000000000002px;top:378.4px;width:1.4px;height:15.600000000000023px;background:#7e7e7e"></div>
<div style="left:224.0px;top:378.79999999999995px;width:1px;height:14.600000000000023px;background:#fbfbfb"></div>
<div style="left:285.90000000000003px;top:378.4px;width:1.4px;height:15.600000000000023px;background:#7e7e7e"></div>
<div style="left:287.20000000000005px;top:378.79999999999995px;width:1px;height:14.600000000000023px;background:#fbfbfb"></div>
<div style="left:351.5px;top:378.4px;width:1.4px;height:15.600000000000023px;background:#7e7e7e"></div>
<div style="left:352.8px;top:378.79999999999995px;width:1px;height:14.600000000000023px;background:#fbfbfb"></div>
<div style="left:414.6px;top:378.4px;width:1.4px;height:15.600000000000023px;background:#7e7e7e"></div>
<div style="left:415.90000000000003px;top:378.79999999999995px;width:1px;height:14.600000000000023px;background:#fbfbfb"></div>
<div style="left:477.8px;top:378.4px;width:1.4px;height:15.600000000000023px;background:#7e7e7e"></div>
<div style="left:479.1px;top:378.79999999999995px;width:1px;height:14.600000000000023px;background:#fbfbfb"></div>
<div style="left:540.6999999999999px;top:364.0px;width:1.4px;height:30.0px;background:#7e7e7e"></div>
<div style="left:542.0px;top:364.4px;width:1px;height:29.0px;background:#fbfbfb"></div>
<div style="left:603.8px;top:378.4px;width:1.4px;height:15.600000000000023px;background:#7e7e7e"></div>
<div style="left:605.1px;top:378.79999999999995px;width:1px;height:14.600000000000023px;background:#fbfbfb"></div>
<div style="left:667.0px;top:378.4px;width:1.4px;height:15.600000000000023px;background:#7e7e7e"></div>
<div style="left:668.3000000000001px;top:378.79999999999995px;width:1px;height:14.600000000000023px;background:#fbfbfb"></div>
<div style="left:732.3px;top:378.4px;width:1.4px;height:15.600000000000023px;background:#7e7e7e"></div>
<div style="left:733.6px;top:378.79999999999995px;width:1px;height:14.600000000000023px;background:#fbfbfb"></div>
<div style="left:795.6999999999999px;top:378.4px;width:1.4px;height:15.600000000000023px;background:#7e7e7e"></div>
<div style="left:797.0px;top:378.79999999999995px;width:1px;height:14.600000000000023px;background:#fbfbfb"></div>
<div style="left:859.0px;top:378.4px;width:1.4px;height:15.600000000000023px;background:#7e7e7e"></div>
<div style="left:860.3000000000001px;top:378.79999999999995px;width:1px;height:14.600000000000023px;background:#fbfbfb"></div>
<div style="left:922.0999999999999px;top:364.0px;width:1.4px;height:30.0px;background:#7e7e7e"></div>
<div style="left:923.4px;top:364.4px;width:1px;height:29.0px;background:#fbfbfb"></div>
<div style="left:985.9px;top:378.4px;width:1.4px;height:15.600000000000023px;background:#7e7e7e"></div>
<div style="left:160.9px;top:378.9px;width:825.7px;height:0.9px;background:#fbfbfb"></div>
<div class="t c" style="left:-17.69999999999999px;width:200px;top:373.30px;">Name</div>
<div class="t c" style="left:250.85000000000002px;width:200px;top:365.70px;font-weight:bold;letter-spacing:-0.45px">1 vs. BootA</div>
<div class="t c" style="left:632.0999999999999px;width:200px;top:365.70px;font-weight:bold;letter-spacing:-0.45px">1 vs. BootB</div>
<div class="t" style="left:162.3px;top:381.30px;letter-spacing:-0.12px">Max group m...</div>
<div class="t" style="left:225.4px;top:381.30px;letter-spacing:-0.12px">Log₂ fold ch...</div>
<div class="t c" style="left:219.39999999999998px;width:200px;top:381.30px;letter-spacing:-0.15px">Fold change</div>
<div class="t c" style="left:283.75px;width:200px;top:381.30px;letter-spacing:-0.15px">P-value</div>
<div class="t c" style="left:346.9px;width:200px;top:381.30px;letter-spacing:-0.15px">FDR p-value</div>
<div class="t c" style="left:409.95px;width:200px;top:381.30px;letter-spacing:-0.15px">Bonferroni</div>
<div class="t" style="left:543.4px;top:381.30px;letter-spacing:-0.12px">Max group m...</div>
<div class="t" style="left:606.5px;top:381.30px;letter-spacing:-0.12px">Log₂ fold ch...</div>
<div class="t c" style="left:600.35px;width:200px;top:381.30px;letter-spacing:-0.15px">Fold change</div>
<div class="t c" style="left:664.7px;width:200px;top:381.30px;letter-spacing:-0.15px">P-value</div>
<div class="t c" style="left:728.05px;width:200px;top:381.30px;letter-spacing:-0.15px">FDR p-value</div>
<div class="t c" style="left:791.25px;width:200px;top:381.30px;letter-spacing:-0.15px">Bonferroni</div>
<div class="t" style="left:924.8px;top:381.30px;letter-spacing:-0.12px">Max group m...</div>
<div style="left:988px;top:394.0px;width:13.8px;height:161.70000000000005px;background:#f0f0f0"></div>
<svg style="left:991.8px;top:399.4px" width="6" height="4" viewBox="0 0 6 4"><path d="M0 3.6H6L3 .2Z" fill="#222"/></svg>
<svg style="left:991.8px;top:546.6px" width="6" height="4" viewBox="0 0 6 4"><path d="M0 .2H6L3 3.6Z" fill="#222"/></svg>
<div style="left:989.4px;top:444.4px;width:11.6px;height:16px;border:1px solid #9a9a9a;border-radius:2.5px;background:linear-gradient(90deg,#f6f6f6,#e4e4e4 45%,#d0d0d0 55%,#c6c6c6)"></div>
<div style="left:992.6px;top:449.8px;width:5.2px;height:0.9px;background:#555"></div>
<div style="left:992.6px;top:452.0px;width:5.2px;height:0.9px;background:#555"></div>
<div style="left:992.6px;top:454.2px;width:5.2px;height:0.9px;background:#555"></div>
<div style="left:4.3px;top:555.7px;width:997.5px;height:12.6px;background:#f0f0f0"></div>
<svg style="left:9.4px;top:559.6px" width="4" height="6" viewBox="0 0 4 6"><path d="M3.6 0V6L.2 3Z" fill="#222"/></svg>
<svg style="left:979.6px;top:559.6px" width="4" height="6" viewBox="0 0 4 6"><path d="M.2 0V6L3.6 3Z" fill="#222"/></svg>
<div style="left:19px;top:556.8px;width:234px;height:11.2px;border:1px solid #9a9a9a;border-radius:2.5px;background:linear-gradient(#f6f6f6,#e4e4e4 45%,#d0d0d0 55%,#c6c6c6)"></div>
<div style="left:133.0px;top:559.8px;width:0.9px;height:5.2px;background:#555"></div>
<div style="left:135.2px;top:559.8px;width:0.9px;height:5.2px;background:#555"></div>
<div style="left:137.39999999999998px;top:559.8px;width:0.9px;height:5.2px;background:#555"></div>
<div class="btn" style="left:320px;top:575.4px;width:105px;height:16px;line-height:13.8px;padding-top:0px;letter-spacing:-0.211px;">Create from selection</div>
<div class="btn" style="left:429.8px;top:575.4px;width:132.2px;height:16px;line-height:13.8px;padding-top:0px;letter-spacing:-0.355px;">Select Names in Other Views</div>
<div class="btn" style="left:567px;top:575.4px;width:119.2px;height:16px;line-height:13.8px;padding-top:0px;letter-spacing:-0.328px;">Copy Names to Clipboard</div>
<div style="left:4.2px;top:598px;width:15px;height:14.4px;border:1px solid #3f98f6;border-radius:2.5px;background:#d8e8fa"></div>
<svg style="left:5.5px;top:600.2px" width="12.4" height="9.8" viewBox="0 0 12.4 9.8"><rect x="0" y="0" width="12.4" height="9.8" rx=".5" fill="#2e201a"/><rect x=".6" y=".6" width="3.0" height="8.6" fill="#f09064"/><rect x="4.7" y=".6" width="3.0" height="8.6" fill="#9cb4f0"/><rect x="8.8" y=".6" width="3.0" height="8.6" fill="#1ed040"/><path d="M0 2.6H12.4M0 4.8H12.4" stroke="#2e201a" stroke-width=".7" opacity=".6"/><path d="M0 7.2H12.4" stroke="#20140e" stroke-width="1" opacity=".85"/></svg>
<svg style="left:21.8px;top:599.4px" width="12" height="12" viewBox="0 0 12 12"><circle cx="4.2" cy="4.0" r="3.55" fill="#f4642e" stroke="#a8401c" stroke-width=".5"/><circle cx="7.55" cy="7.6" r="3.3" fill="#f8e050" stroke="#c8a428" stroke-width=".5"/><path d="M4.3 7.4A3.3 3.3 0 0 1 7.5 4.3 3.55 3.55 0 0 1 4.3 7.4Z" fill="#f4a024"/></svg>
<svg style="left:38.4px;top:599.8px" width="10" height="10.8" viewBox="0 0 10 10.8"><rect x=".5" y=".5" width="9" height="9.8" fill="#c4daf0" stroke="#4a84c4" stroke-width=".9"/><rect x="1.5" y="1.4" width="7" height="6.6" fill="#eef4fa"/><circle cx="5" cy="4.6" r="2.6" fill="#f8fbfe" stroke="#5a88c0" stroke-width=".8"/><path d="M5 3.1V4.7L6.3 5.3" stroke="#5a88c0" stroke-width=".7" fill="none"/><path d="M1.6 8.9H8.4" stroke="#f0f6fc" stroke-width=".9"/></svg>
<svg style="left:53.8px;top:598.8px" width="13" height="12" viewBox="0 0 13 12"><path d="M.7 1.3H6.4L8.9 3.8V11.1H.7Z" fill="#f6faff" stroke="#3c78c0" stroke-width=".9"/><path d="M6.2 1.5V4H8.7" fill="none" stroke="#7ca4d8" stroke-width=".7"/><path d="M4.9 8.2L7.3 10.8L11.2 1.2" fill="none" stroke="#1c9a34" stroke-width="1.5"/></svg>
<div style="left:0px;top:615.2px;width:1248px;height:1.0px;background:#d0d0d0"></div>
<div style="left:0px;top:616.2px;width:1248px;height:1.0px;background:#fafafa"></div>
<div style="left:0px;top:616.6px;width:1248px;height:18.4px;background:#f0f0f0"></div>
<div style="left:0px;top:620px;width:3px;height:12.4px;background:#2a62b4"></div>
<div class="t" style="left:8.3px;top:620.50px;letter-spacing:0.099px;">Idle...</div>
<div class="t" style="left:1182px;top:620.50px;letter-spacing:-0.289px;">39 rows selected</div>
<div style="left:1006.8px;top:329.6px;width:238.4px;height:1.2px;background:#a4a4a4"></div>
<div style="left:1006.8px;top:329.6px;width:1.1px;height:285px;background:#9c9c9c"></div>
<div style="left:1245.2px;top:329.6px;width:1.2px;height:286px;background:#fcfcfc"></div>
<svg style="left:1012.2px;top:333.6px" width="8" height="10.4" viewBox="0 0 8 10.4"><rect x="0" y="0" width="1.7" height="10.4" fill="#111"/><path d="M3 2L7.2 5.2L3 8.4Z" fill="#111"/></svg>
<div class="t" style="left:1024.9px;top:332.90px;letter-spacing:-0.238px;color:#3c3c3c">Table Settings</div>
<div style="left:1008px;top:346.8px;width:222.5999999999999px;height:3.2px;background:linear-gradient(#f0f0f0,#c8c8c8 55%,#d4d4d4)"></div>
<div style="left:1008px;top:350.0px;width:222.5999999999999px;height:12px;background:#dcdcdc"></div>
<div style="left:1008px;top:350.0px;width:81.2px;height:12px;background:#f1f1f1;border-right:1px solid #e6e6e6"></div>
<div class="t" style="left:1015.0px;top:349.90px;letter-spacing:-0.302px;">Column width</div>
<div style="left:1218.6px;top:354.2px;width:9.4px;height:3.4px;border:.9px solid #8c8c8c;border-radius:1.6px;background:#f0f0f0"></div>
<div class="combo" style="left:1090.5px;top:365.3px;width:57.2px;height:15.4px;"></div>
<div class="t" style="left:1093.0px;top:367.10px;letter-spacing:-0.386px;">Manual</div>
<svg style="left:1136.5px;top:372.4px" width="6" height="4" viewBox="0 0 6 4"><path d="M0 0H6L3 3.4Z" fill="#111"/></svg>
<div style="left:1008px;top:383.4px;width:222.6px;height:1px;background:#c0c0c0"></div>
<div style="left:1008px;top:383.7px;width:222.5999999999999px;height:3.2px;background:linear-gradient(#f0f0f0,#c8c8c8 55%,#d4d4d4)"></div>
<div style="left:1008px;top:386.9px;width:222.5999999999999px;height:12px;background:#dcdcdc"></div>
<div style="left:1008px;top:386.9px;width:82.4px;height:12px;background:#f1f1f1;border-right:1px solid #e6e6e6"></div>
<div class="t" style="left:1015.0px;top:386.80px;letter-spacing:-0.537px;">Common columns</div>
<div style="left:1218.6px;top:391.09999999999997px;width:9.4px;height:3.4px;border:.9px solid #8c8c8c;border-radius:1.6px;background:#f0f0f0"></div>
<div class="cb" style="left:1087.8px;top:405.9px;width:10.4px;height:10.4px;"></div>
<svg style="left:1087.8px;top:405.9px" width="10.4" height="10.4" viewBox="0 0 10.4 10.4"><path d="M2.5 3.6L4.4 7L7.9 1.6" fill="none" stroke="#4a5ea4" stroke-width="1.25" stroke-linejoin="round"/></svg>
<div class="t" style="left:1101px;top:404.80px;letter-spacing:-0.677px;">Name</div>
<div class="btn" style="left:1085.5px;top:421.2px;width:67.4px;height:16px;line-height:13.8px;padding-top:0.8px;letter-spacing:-0.252px;">Select All</div>
<div class="btn" style="left:1085.5px;top:439.3px;width:67.4px;height:16.2px;line-height:14.0px;padding-top:0.8px;letter-spacing:-0.227px;">Deselect All</div>
<div style="left:1008px;top:459.2px;width:222.6px;height:1px;background:#c0c0c0"></div>
<div style="left:1008px;top:459.2px;width:222.5999999999999px;height:3.2px;background:linear-gradient(#f0f0f0,#c8c8c8 55%,#d4d4d4)"></div>
<div style="left:1008px;top:462.4px;width:222.5999999999999px;height:12px;background:#dcdcdc"></div>
<div style="left:1008px;top:462.4px;width:102.8px;height:12px;background:#f1f1f1;border-right:1px solid #e6e6e6"></div>
<div class="t" style="left:1015.0px;top:462.30px;letter-spacing:-0.280px;">Statistical comparisons</div>
<div style="left:1218.6px;top:466.59999999999997px;width:9.4px;height:3.4px;border:.9px solid #8c8c8c;border-radius:1.6px;background:#f0f0f0"></div>
<div style="left:1008px;top:474.2px;width:222px;height:125px;overflow:hidden">
<div class="cb" style="left:73.79999999999995px;top:7.50px;width:10.4px;height:10.4px"></div>
<svg style="left:73.79999999999995px;top:7.50px" width="10.4" height="10.4" viewBox="0 0 10.4 10.4"><path d="M2.5 3.6L4.4 7L7.9 1.6" fill="none" stroke="#4a5ea4" stroke-width="1.25" stroke-linejoin="round"/></svg>
<div class="t" style="left:87.40000000000009px;top:6.30px;letter-spacing:-0.211px;">1 vs. BootA</div>
<div class="cb" style="left:73.79999999999995px;top:25.56px;width:10.4px;height:10.4px"></div>
<svg style="left:73.79999999999995px;top:25.56px" width="10.4" height="10.4" viewBox="0 0 10.4 10.4"><path d="M2.5 3.6L4.4 7L7.9 1.6" fill="none" stroke="#4a5ea4" stroke-width="1.25" stroke-linejoin="round"/></svg>
<div class="t" style="left:87.40000000000009px;top:24.36px;letter-spacing:-0.302px;">1 vs. BootB</div>
<div class="cb" style="left:73.79999999999995px;top:43.62px;width:10.4px;height:10.4px"></div>
<svg style="left:73.79999999999995px;top:43.62px" width="10.4" height="10.4" viewBox="0 0 10.4 10.4"><path d="M2.5 3.6L4.4 7L7.9 1.6" fill="none" stroke="#4a5ea4" stroke-width="1.25" stroke-linejoin="round"/></svg>
<div class="t" style="left:87.40000000000009px;top:42.42px;letter-spacing:-0.087px;">2 vs. 1</div>
<div class="cb" style="left:73.79999999999995px;top:61.68px;width:10.4px;height:10.4px"></div>
<svg style="left:73.79999999999995px;top:61.68px" width="10.4" height="10.4" viewBox="0 0 10.4 10.4"><path d="M2.5 3.6L4.4 7L7.9 1.6" fill="none" stroke="#4a5ea4" stroke-width="1.25" stroke-linejoin="round"/></svg>
<div class="t" style="left:87.40000000000009px;top:60.48px;letter-spacing:-0.193px;">2 vs. BootA</div>
<div class="cb" style="left:73.79999999999995px;top:79.74px;width:10.4px;height:10.4px"></div>
<svg style="left:73.79999999999995px;top:79.74px" width="10.4" height="10.4" viewBox="0 0 10.4 10.4"><path d="M2.5 3.6L4.4 7L7.9 1.6" fill="none" stroke="#4a5ea4" stroke-width="1.25" stroke-linejoin="round"/></svg>
<div class="t" style="left:87.40000000000009px;top:78.54px;letter-spacing:-0.284px;">2 vs. BootB</div>
<div class="cb" style="left:73.79999999999995px;top:97.80px;width:10.4px;height:10.4px"></div>
<svg style="left:73.79999999999995px;top:97.80px" width="10.4" height="10.4" viewBox="0 0 10.4 10.4"><path d="M2.5 3.6L4.4 7L7.9 1.6" fill="none" stroke="#4a5ea4" stroke-width="1.25" stroke-linejoin="round"/></svg>
<div class="t" style="left:87.40000000000009px;top:96.60px;letter-spacing:-0.087px;">3 vs. 1</div>
<div class="cb" style="left:73.79999999999995px;top:115.86px;width:10.4px;height:10.4px"></div>
<svg style="left:73.79999999999995px;top:115.86px" width="10.4" height="10.4" viewBox="0 0 10.4 10.4"><path d="M2.5 3.6L4.4 7L7.9 1.6" fill="none" stroke="#4a5ea4" stroke-width="1.25" stroke-linejoin="round"/></svg>
<div class="t" style="left:87.40000000000009px;top:114.66px;letter-spacing:-0.087px;">3 vs. 2</div>
</div>
<div style="left:1229.8000000000002px;top:360.8px;width:1.2px;height:238.59999999999997px;background:linear-gradient(90deg,#cfcfcf,#e2e2e2)"></div>
<svg style="left:1235.0px;top:351.8px" width="6" height="3.4" viewBox="0 0 6 3.4"><path d="M0 3.2H6L3 0Z" fill="#222"/></svg>
<svg style="left:1235.2px;top:591.8px" width="5.6" height="3.4" viewBox="0 0 5.6 3.4"><path d="M0 .2H5.6L2.8 3.4Z" fill="#222"/></svg>
<div style="left:1231.8000000000002px;top:360.4px;width:11.8px;height:107.60000000000002px;border:1.1px solid #adadad;border-radius:2.5px;background:linear-gradient(90deg,#fbfbfb,#f0f0f0 38%,#d2d2d6 48%,#c6c6ca);box-shadow:inset 0 0 0 .6px rgba(255,255,255,.6)"></div>
<div style="left:1235.4px;top:411.40000000000003px;width:5.2px;height:0.9px;background:#666"></div>
<div style="left:1235.4px;top:413.8px;width:5.2px;height:0.9px;background:#666"></div>
<div style="left:1235.4px;top:416.2px;width:5.2px;height:0.9px;background:#666"></div>
<div style="left:1010.1px;top:605.1999999999999px;width:8.8px;height:3.3px;border:.9px solid #8c8c8c;border-radius:1.6px;background:#f2f2f2"></div>
<svg style="left:1022.6px;top:603.0px" width="10" height="9" viewBox="0 0 10 9"><path d="M.5 8.2V.7H3.9L4.8 1.9H8.9V8.2Z" fill="#f4f4f4" stroke="#707070" stroke-width=".9" stroke-linejoin="round"/></svg>
<svg style="left:1036.6px;top:602.6px" width="9" height="10" viewBox="0 0 9 10"><path d="M1 3H5.6M1 7H5.6M7.4 .6V9.4M3.8 1.4L5.6 3L3.8 4.6M3.8 5.4L5.6 7L3.8 8.6" fill="none" stroke="#c0c0c0" stroke-width=".9"/></svg>
<div class="t" style="left:1221.4px;top:600.20px;color:#8a8a8a;font-size:9.5px">?</div>
<svg style="left:1233.4px;top:602.8px" width="9" height="8" viewBox="0 0 9 8"><path d="M0 1H1.4M2.6 1H9M0 3.6H1.4M2.6 3.6H9M0 6.2H1.4M2.6 6.2H5" stroke="#7a7a7a" stroke-width="1"/><path d="M5.6 5.4H9L7.3 7.6Z" fill="#555"/></svg>
</div>
</body></html>
